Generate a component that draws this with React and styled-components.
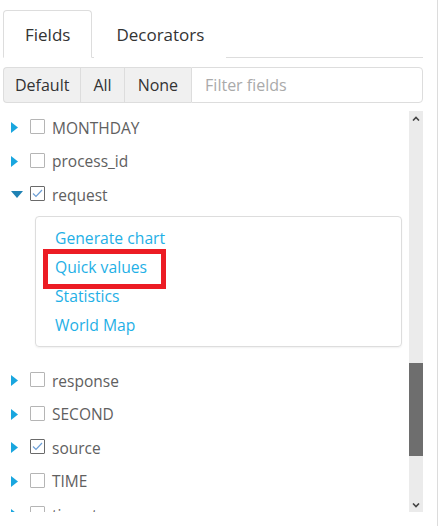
import React from 'react'
import styled, { createGlobalStyle } from 'styled-components'

const GlobalStyle = createGlobalStyle`
  html, body {
    margin: 0;
    padding: 0;
    background: #fff;
  }
  body {
    font-family: "Open Sans", "Liberation Sans", sans-serif;
    color: #555;
  }
`

const Page = styled.div`
  box-sizing: border-box;
  width: 438px;
  height: 526px;
  padding: 10px 14px 0 3px;
  border-right: 1px solid #dcdcdc;
  overflow: hidden;
`

const Tabs = styled.ul`
  display: flex;
  margin: 0;
  padding: 0;
  list-style: none;
  border-bottom: 1px solid #ddd;
  height: 47px;
`

const Tab = styled.li`
  box-sizing: border-box;
  display: flex;
  align-items: center;
  padding: 0 21px;
  height: 48px;
  font-size: 17px;
  color: #333;
  border: 1px solid ${p => (p.$active ? '#ddd' : 'transparent')};
  border-bottom-color: ${p => (p.$active ? '#fff' : 'transparent')};
  border-radius: 4px 4px 0 0;
  background: #fff;
  margin-right: 2px;
`

const Toolbar = styled.div`
  display: flex;
  margin-top: 9px;
  height: 36px;
`

const GroupButton = styled.button`
  box-sizing: border-box;
  font-family: inherit;
  font-size: 16px;
  color: #333;
  background: #f0f0f0;
  border: 1px solid #ddd;
  border-right: none;
  padding: 0 ${p => p.$pad}px;
  height: 36px;
  &:first-child {
    border-radius: 4px 0 0 4px;
  }
`

const Filter = styled.input`
  box-sizing: border-box;
  flex: 1;
  height: 36px;
  font-family: inherit;
  font-size: 16px;
  color: #333;
  border: 1px solid #ddd;
  border-radius: 0 4px 4px 0;
  padding: 0 13px;
  outline: none;
  &::placeholder {
    color: #aaa;
  }
`

const ListArea = styled.div`
  display: flex;
  margin-top: 8px;
  height: 401px;
`

const List = styled.div`
  flex: 1;
  overflow: hidden;
  padding-right: 7px;
`

const Row = styled.div`
  display: flex;
  align-items: center;
  height: 33.5px;
  font-size: 15.5px;
  color: #606060;
`

const Caret = styled.span`
  width: 27px;
  display: flex;
  padding-left: 8px;
  box-sizing: border-box;
  justify-content: flex-start;
`

const Check = styled.span`
  box-sizing: border-box;
  width: 15px;
  height: 15px;
  margin-right: 7px;
  border: 1px solid ${p => (p.$on ? '#6a6a6a' : '#b5b5b5')};
  border-radius: 1px;
  display: flex;
  align-items: center;
  justify-content: center;
  margin-top: -2px;
`

const Panel = styled.div`
  margin: 4.5px 0 17px 32px;
  border: 1px solid #ddd;
  border-radius: 4px;
  box-shadow: 0 1px 2px rgba(0, 0, 0, 0.06);
  padding: 7px 19px 6px;
`

const Action = styled.a`
  display: block;
  width: fit-content;
  font-size: 15.7px;
  line-height: 29px;
  color: #1fb0e6;
  text-decoration: none;
  position: relative;
  ${p =>
    p.$marked &&
    `
    &::after {
      content: '';
      position: absolute;
      top: -4px;
      bottom: -7px;
      left: -12px;
      right: -19px;
      border: 5px solid #ec1c24;
    }
  `}
`

const Scrollbar = styled.div`
  width: 14px;
  background: #ebebeb;
  display: flex;
  flex-direction: column;
`

const Arrow = styled.div`
  height: 14px;
  display: flex;
  align-items: center;
  justify-content: center;
`

const Track = styled.div`
  flex: 1;
  padding-top: ${p => p.$offset}px;
`

const Thumb = styled.div`
  height: 93px;
  background: #6e6e6e;
`

const RightCaret = () => (
  <svg width="7" height="11" viewBox="0 0 7 11">
    <polygon points="0,0 7,5.5 0,11" fill="#19a6df" />
  </svg>
)

const DownCaret = () => (
  <svg width="12" height="7" viewBox="0 0 12 7">
    <polygon points="0,0 12,0 6,7" fill="#1f82b4" />
  </svg>
)

const Tick = () => (
  <svg width="11" height="9" viewBox="0 0 11 9">
    <polyline points="1,4.5 4,7.5 10,1" fill="none" stroke="#6d9fd6" strokeWidth="1.2" />
  </svg>
)

const Chevron = ({ up }) => (
  <svg width="8" height="5" viewBox="0 0 8 5">
    <polyline
      points={up ? '1,4.5 4,1.5 7,4.5' : '1,0.5 4,3.5 7,0.5'}
      fill="none"
      stroke="#444"
      strokeWidth="1.6"
    />
  </svg>
)

const FieldRow = ({ name, checked, open }) => (
  <Row>
    <Caret>{open ? <DownCaret /> : <RightCaret />}</Caret>
    <Check $on={checked}>{checked && <Tick />}</Check>
    {name}
  </Row>
)

const App = () => (
  <Page>
    <GlobalStyle />
    <Tabs>
      <Tab $active>Fields</Tab>
      <Tab>Decorators</Tab>
    </Tabs>
    <Toolbar>
      <GroupButton $pad={11}>Default</GroupButton>
      <GroupButton $pad={12}>All</GroupButton>
      <GroupButton $pad={13}>None</GroupButton>
      <Filter placeholder="Filter fields" />
    </Toolbar>
    <ListArea>
      <List>
        <FieldRow name="MONTHDAY" />
        <FieldRow name="process_id" />
        <FieldRow name="request" checked open />
        <Panel>
          <Action href="#">Generate chart</Action>
          <Action href="#" $marked>
            Quick values
          </Action>
          <Action href="#">Statistics</Action>
          <Action href="#">World Map</Action>
        </Panel>
        <FieldRow name="response" />
        <FieldRow name="SECOND" />
        <FieldRow name="source" checked />
        <FieldRow name="TIME" />
        <FieldRow name="timestamp" />
      </List>
      <Scrollbar>
        <Arrow>
          <Chevron up />
        </Arrow>
        <Track $offset={238}>
          <Thumb />
        </Track>
        <Arrow>
          <Chevron />
        </Arrow>
      </Scrollbar>
    </ListArea>
  </Page>
)

export default App
